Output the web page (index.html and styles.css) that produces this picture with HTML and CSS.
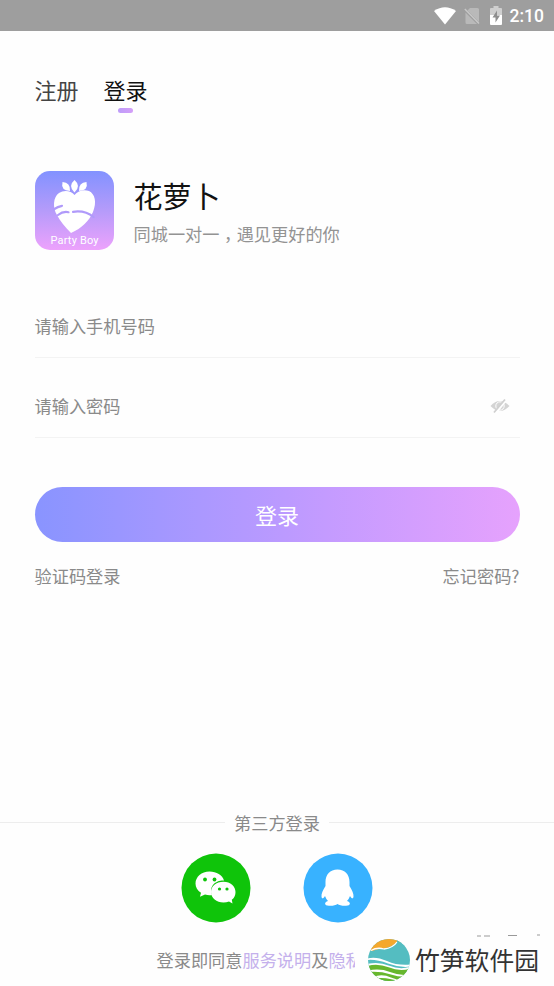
FILE: index.html
```html
<!DOCTYPE html>
<html lang="zh-CN">
<head>
<meta charset="utf-8">
<title>登录</title>
<link rel="stylesheet" href="styles.css">
</head>
<body>
<div class="screen">
  <header class="status">
    <svg class="wifi" width="22" height="18" viewBox="0 0 22 18"><path d="M0 4Q11-3.500 22 4L11 17.500Z" fill="#fff"/></svg>
    <svg class="sim" width="16" height="18" viewBox="0 0 16 18"><path d="M6 1H13.500Q15 1 15 2.500V15L3.500 3.500ZM1.500 5.500L13 17H3Q1.500 17 1.500 15.500Z" fill="#b9b9b9"/><path d="M.8 2L15 16.500" stroke="#c8c8c8" stroke-width="1.400"/></svg>
    <svg class="battery" width="12" height="19" viewBox="0 0 12 19"><path d="M3.500 0h5v2H11q1 0 1 1v6H0V3q0-1 1-1h2.500Z" fill="#cfcfcf"/><path d="M0 9h12v9q0 1-1 1H1q-1 0-1-1Z" fill="#fff"/><path d="M7 4.500L2.500 11.500h3V16.500L10 9.500H7Z" fill="#8f8f8f"/></svg>
    <span class="time">2:10</span>
  </header>

  <main class="content">
    <nav class="tabs">
      <span class="tab">注册</span>
      <span class="tab active">登录</span>
    </nav>

    <section class="brand">
      <svg class="logo" width="79" height="79" viewBox="0 0 79 79">
        <defs><linearGradient id="logoFill" x1="0" y1="0" x2="0" y2="1"><stop offset="0" stop-color="#8292ff"/><stop offset=".5" stop-color="#b59bfa"/><stop offset="1" stop-color="#eda2fc"/></linearGradient></defs>
        <rect width="79" height="79" rx="15" fill="url(#logoFill)"/>
        <g fill="#fff">
          <path d="M39.500 9Q32.500 15 39.500 21.500Q46.500 15 39.500 9Z"/>
          <path d="M27.500 11Q25.500 19.500 35 20Q35.500 11.500 27.500 11Z"/>
          <path d="M51.500 11Q53.500 19.500 44 20Q43.500 11.500 51.500 11Z"/>
          <path d="M39.500 24C36 19.500 29 18.500 24 22C18 26 17.500 37 22 44C25 50 30 56 36 62C47 57 54 50 58 41C62 31 60 23 54 20C49 18 43 19.500 39.500 24Z"/>
        </g>
        <path d="M18.500 38.500Q23 35.500 27 34.800M23 44Q28 40 33.500 41.200M38 40.800Q50 39 58.500 46" fill="none" stroke="#b09afa" stroke-width="2.200" stroke-linecap="round"/>
        <text class="logo-text" x="39.500" y="73" text-anchor="middle" textLength="48">Party Boy</text>
      </svg>
      <div class="brand-copy">
        <h1>花萝卜</h1>
        <p>同城一对一<span class="comma" lang="zh-TW">，</span>遇见更好的你</p>
      </div>
    </section>

    <form class="form">
      <div class="field">请输入手机号码</div>
      <div class="field">请输入密码
        <svg class="eye" width="20" height="16" viewBox="0 0 20 16"><path d="M.5 8Q9.500-2 19.500 8Q10 18 .5 8Z" fill="#d4d4d4"/><circle cx="10" cy="8" r="4.200" fill="none" stroke="#fff" stroke-width="1"/><path d="M5.600 15.200L16.200 1.800" stroke="#fff" stroke-width="2.400"/><path d="M4 14.500L15 1.500" stroke="#d0d0d0" stroke-width="1.800"/></svg>
      </div>
      <div class="submit">登录</div>
      <div class="links"><span>验证码登录</span><span>忘记密码?</span></div>
    </form>
  </main>

  <footer class="third">
    <div class="divider"><span>第三方登录</span></div>
    <div class="socials">
      <svg width="70" height="70" viewBox="0 0 70 70"><circle cx="35" cy="35" r="34.500" fill="#0fc40a"/><path d="M28.500 18.500C20.500 18.500 14.500 24 14.500 30.500C14.500 34.500 16.500 37.500 20 39.800L19 43.800L24 41.500Q28 42.800 31 42C27.500 33 35 27 43 27.500C41.500 22 35.500 18.500 28.500 18.500Z" fill="#fff"/><path d="M42.500 28.800C35 28.800 30 33.500 30 39C30 45 35.500 49.500 42.500 49.500Q45.500 49.500 48 48.500L51.500 50.500L50.800 46.800C53.500 44.800 54.500 42 54.500 39C54.500 33.500 49.500 28.800 42.500 28.800Z" fill="#fff"/><g fill="#0fc40a"><circle cx="24" cy="26.500" r="1.900"/><circle cx="33.500" cy="26.500" r="1.900"/><circle cx="38.500" cy="36" r="1.600"/><circle cx="46" cy="36" r="1.600"/></g></svg>
      <svg width="70" height="70" viewBox="0 0 70 70"><circle cx="35" cy="35" r="34.500" fill="#38b2ff"/><path d="M34.500 16.500C27 16.500 22.500 21.500 22.500 29V33C20 37 18.200 40.500 18.500 43.500C18.800 46.500 20.500 45.500 22 43Q22.800 45.500 25 48C21 49.500 21 52.500 26 52.800Q32 53 34.500 51Q37 53 43 52.800C48 52.500 48 49.500 44 48Q46.200 45.500 47 43C48.500 45.500 50.200 46.500 50.500 43.500C50.800 40.500 49 37 46.500 33V29C46.500 21.500 42 16.500 34.500 16.500Z" fill="#fff"/></svg>
    </div>
    <p class="agreement">登录即同意<a>服务说明</a>及<a>隐私</a></p>
  </footer>

  <aside class="watermark">
    <svg class="bits" width="72" height="4" viewBox="0 0 72 4"><path d="M2 2h4M9 2h6M33 1.500h9M62 1h3" stroke="#999" stroke-width="1.200"/></svg>
    <svg class="seal" width="42" height="42" viewBox="0 0 42 42">
      <defs><clipPath id="disc"><circle cx="21" cy="21" r="21"/></clipPath></defs>
      <g clip-path="url(#disc)">
        <rect width="42" height="42" fill="#54bdc1"/>
        <path d="M0 0H42V4L29 3Q24 8 16 9.500Q10 9.500 4 12L0 10Z" fill="#f5a82d"/>
        <path d="M3 11.500Q9 8 16 10Q25 9 29 3" fill="none" stroke="#fff" stroke-width="1.300"/>
        <path d="M29 3V-1H43V12Z" fill="#54bdc1"/>
        <path d="M-1 19.500Q8 17 19 22T43 25.500V27.500Q32 29 20 24.500T-1 21Z" fill="#fff"/>
        <path d="M-1 27Q10 23 21 27.500T43 29V44H-1Z" fill="#67b72d"/>
        <path d="M-1 26Q10 23 21 27.500T43 28.500" fill="none" stroke="#fff" stroke-width="1.800"/>
        <path d="M0 31.500Q12 29 22 33T42 36V37.500Q32 38.500 22 35.200T0 33ZM5 38Q14 34.500 23 38.500T38 40V41.500Q28 41.500 22 40T5 39.500Z" fill="#fff"/>
      </g>
    </svg>
    <span>竹笋软件园</span>
  </aside>
</div>
</body>
</html>
```
FILE: styles.css
```css
* { box-sizing: border-box; }
body, h1, p { margin: 0; }
body { background: #fff; }
.screen {
  position: relative;
  display: flex;
  flex-direction: column;
  width: 554px;
  height: 986px;
  overflow: hidden;
  background: #fefefe;
  color: #8a8a8a;
  font: 17.2px/24px "Noto Sans CJK SC", sans-serif;
}
.status {
  display: flex;
  justify-content: flex-end;
  align-items: center;
  height: 31px;
  padding-right: 10px;
  background: #9e9e9e;
}
.sim { margin-left: 8px; }
.battery { margin-left: 10px; }
.time { margin-left: 8px; padding-top: 1px; color: #fff; font: 500 17.5px/30px Roboto, sans-serif; }
.content { padding: 42px 34.5px 0 34.5px; }
.tabs { display: flex; gap: 25px; height: 40px; }
.tab { color: #444; font-size: 22px; line-height: 32px; }
.tab.active { display: flex; flex-direction: column; align-items: center; color: #111; }
.tab.active::after {
  content: "";
  flex: none;
  width: 15px;
  height: 5px;
  margin: 3px 1px 0 0;
  border-radius: 3px;
  background: linear-gradient(90deg, #bd9cf9, #d49ff8);
}
.brand { display: flex; gap: 20px; margin-top: 58px; height: 79px; }
.logo { flex: none; }
.logo-text { fill: #fff; font: 400 11px Roboto, sans-serif; }
.brand-copy { display: flex; flex-direction: column; }
.brand h1 { padding-top: 4px; color: #111; font-size: 29px; font-weight: 400; line-height: 40px; }
.brand p { margin-top: 7px; color: #939393; }
.comma { font-family: "Noto Sans CJK TC", sans-serif; position: relative; top: 5px; }
.form { display: flex; flex-direction: column; margin-top: 48px; }
.field {
  display: flex;
  justify-content: space-between;
  align-items: center;
  height: 80px;
  padding: 0 10px 1px 0;
  border-bottom: 1px solid #f3f3f3;
}
.field:first-child { height: 60px; padding-bottom: 3px; }
.field:nth-child(2) { padding-top: 18px; }
.submit {
  height: 55px;
  margin-top: 49px;
  border-radius: 28px;
  background: linear-gradient(90deg, #8994ff, #c49bff 60%, #e6a2fd);
  color: #fff;
  font-size: 22px;
  line-height: 54px;
  text-align: center;
}
.links { display: flex; justify-content: space-between; margin-top: 22px; }
.third { margin-top: auto; height: 176px; }
.divider { display: flex; align-items: center; gap: 9px; }
.divider span { position: relative; top: 1px; }
.divider::before, .divider::after { content: ""; flex: 1; height: 1px; background: #ededed; }
.socials { display: flex; justify-content: center; gap: 52px; margin-top: 19px; }
.agreement { margin: 25px 0 0 156.5px; white-space: nowrap; }
.agreement a { color: #c4b0ec; }
.watermark {
  position: absolute;
  right: 0;
  bottom: 0;
  display: flex;
  align-items: center;
  width: 199px;
  height: 52px;
  padding-left: 13px;
  background: #fefefe;
  color: #333;
  font-size: 24.8px;
  line-height: 36px;
}
.watermark span { padding-bottom: 2px; }
.seal { margin-right: 5px; }
.bits { position: absolute; left: 120px; top: 0; }
```
